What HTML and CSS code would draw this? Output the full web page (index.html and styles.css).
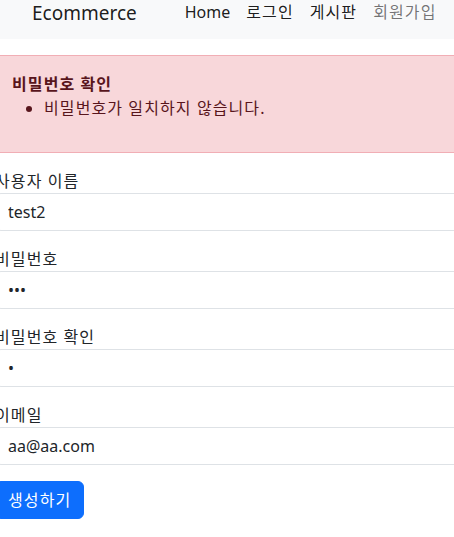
FILE: index.html
```html
<!DOCTYPE html>
<html lang="ko">
<head>
<meta charset="utf-8">
<title>Ecommerce</title>
<link rel="stylesheet" href="styles.css">
</head>
<body>
<nav class="navbar">
  <a class="brand" href="#">Ecommerce</a>
  <ul class="nav">
    <li><a class="nav-link active" href="#">Home</a></li>
    <li><a class="nav-link active ko" href="#">로그인</a></li>
    <li><a class="nav-link active ko" href="#">게시판</a></li>
    <li><a class="nav-link ko" href="#">회원가입</a></li>
  </ul>
</nav>
<main class="content">
  <div class="alert ko">
    <strong class="alert-title">비밀번호 확인</strong>
    <ul class="alert-list">
      <li>비밀번호가 일치하지 않습니다.</li>
    </ul>
  </div>
  <form class="form">
    <div class="group">
      <label class="ko" for="username">사용자 이름</label>
      <input id="username" class="control" type="text" value="test2">
    </div>
    <div class="group">
      <label class="ko" for="password1">비밀번호</label>
      <input id="password1" class="control" type="password" value="abc">
    </div>
    <div class="group">
      <label class="ko" for="password2">비밀번호 확인</label>
      <input id="password2" class="control" type="password" value="a">
    </div>
    <div class="group">
      <label class="ko" for="email">이메일</label>
      <input id="email" class="control" type="email" value="aa@aa.com">
    </div>
    <button type="submit" class="btn ko">생성하기</button>
  </form>
</main>
</body>
</html>
```
FILE: styles.css
```css
html, body {
  overflow: hidden;
}
body {
  margin: 0;
  font-family: "Noto Sans", "Noto Sans CJK KR", sans-serif;
  font-size: 16px;
  line-height: 24px;
  color: #212529;
  background: #fff;
}
.ko {
  letter-spacing: 1.1px;
}
.navbar {
  height: 39px;
  background: #f8f9fa;
  display: flex;
  align-items: flex-start;
  padding-left: 32px;
}
.brand {
  font-size: 19px;
  line-height: 26px;
  color: rgba(0, 0, 0, 0.9);
  text-decoration: none;
  margin-right: 40px;
}
.nav {
  list-style: none;
  margin: 0;
  padding: 0;
  display: flex;
}
.nav-link {
  display: block;
  padding: 0 8px;
  line-height: 24px;
  text-decoration: none;
  color: rgba(0, 0, 0, 0.55);
}
.nav-link.active {
  color: rgba(0, 0, 0, 0.9);
}
.content {
  margin-top: 16px;
  margin-left: -5px;
  width: 480px;
}
.alert {
  background: #f8d7da;
  border: 1px solid #f1aeb5;
  color: #58151c;
  padding: 16px;
  margin-bottom: 16px;
}
.alert-title {
  display: block;
  font-weight: 700;
}
.alert-list {
  margin: 0 0 16px;
  padding-left: 32px;
}
.group {
  margin-bottom: 16px;
}
.group label {
  display: block;
}
.control {
  display: block;
  box-sizing: border-box;
  width: 100%;
  height: 38px;
  margin: 0;
  padding: 6px 12px;
  font: inherit;
  color: #212529;
  background: #fff;
  border: 1px solid #dee2e6;
  border-radius: 6px;
  outline: none;
}
.btn {
  font: inherit;
  height: 38px;
  padding: 6px 12px;
  color: #fff;
  background: #0d6efd;
  border: 1px solid #0d6efd;
  border-radius: 6px;
  cursor: pointer;
}
```
